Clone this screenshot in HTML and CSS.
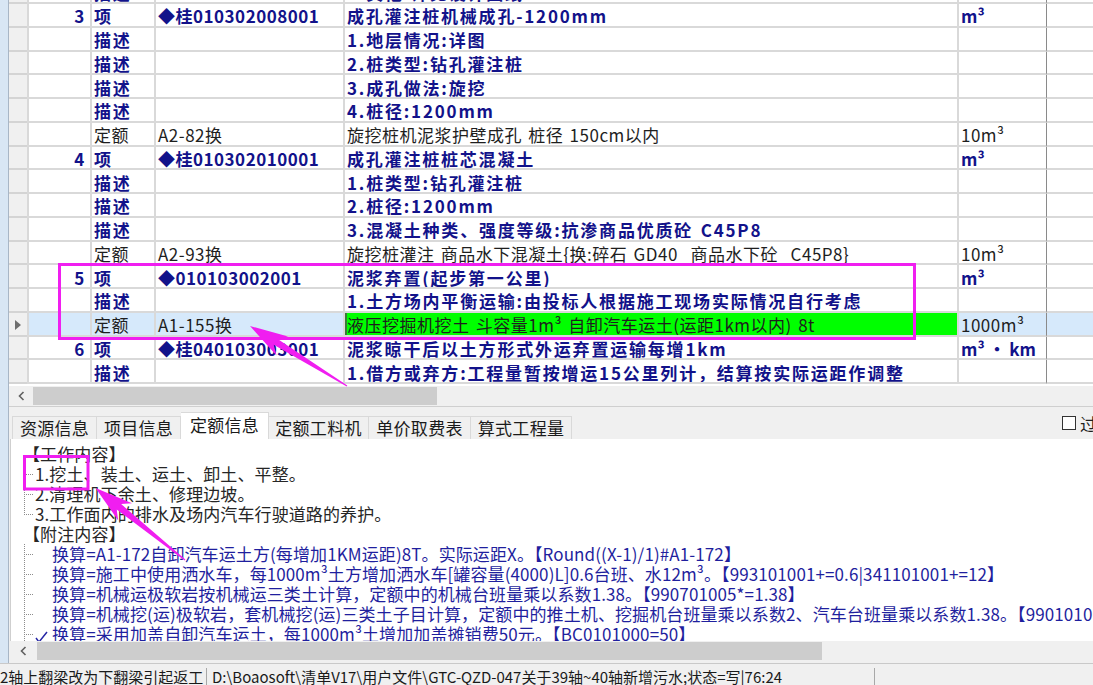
FILE: index.html
```html
<!DOCTYPE html>
<html lang="zh-CN">
<head>
<meta charset="utf-8">
<title>清单</title>
<link rel="stylesheet" href="styles.css">
</head>
<body>
<div class="app">
  <div class="main">
    <div class="strip"></div>
    <div class="panel">
      <div class="gridwrap">
        <div class="grid">
          <div class="row"><div class="c rh"></div><div class="c num b"></div><div class="c typ b">描述</div><div class="c code"></div><div class="c name b">5.其他:详见设计图纸</div><div class="c unit"></div><div class="c rest"></div></div>
          <div class="row"><div class="c rh"></div><div class="c num b">3</div><div class="c typ b">项</div><div class="c code b">◆桂010302008001</div><div class="c name b">成孔灌注桩机械成孔-1200mm</div><div class="c unit b">m³</div><div class="c rest"></div></div>
          <div class="row"><div class="c rh"></div><div class="c num"></div><div class="c typ b">描述</div><div class="c code"></div><div class="c name b">1.地层情况:详图</div><div class="c unit"></div><div class="c rest"></div></div>
          <div class="row"><div class="c rh"></div><div class="c num"></div><div class="c typ b">描述</div><div class="c code"></div><div class="c name b">2.桩类型:钻孔灌注桩</div><div class="c unit"></div><div class="c rest"></div></div>
          <div class="row"><div class="c rh"></div><div class="c num"></div><div class="c typ b">描述</div><div class="c code"></div><div class="c name b">3.成孔做法:旋挖</div><div class="c unit"></div><div class="c rest"></div></div>
          <div class="row"><div class="c rh"></div><div class="c num"></div><div class="c typ b">描述</div><div class="c code"></div><div class="c name b">4.桩径:1200mm</div><div class="c unit"></div><div class="c rest"></div></div>
          <div class="row"><div class="c rh"></div><div class="c num"></div><div class="c typ">定额</div><div class="c code">A2-82换</div><div class="c name">旋挖桩机泥浆护壁成孔 桩径 150cm以内</div><div class="c unit">10m³</div><div class="c rest"></div></div>
          <div class="row"><div class="c rh"></div><div class="c num b">4</div><div class="c typ b">项</div><div class="c code b">◆桂010302010001</div><div class="c name b">成孔灌注桩桩芯混凝土</div><div class="c unit b">m³</div><div class="c rest"></div></div>
          <div class="row"><div class="c rh"></div><div class="c num"></div><div class="c typ b">描述</div><div class="c code"></div><div class="c name b">1.桩类型:钻孔灌注桩</div><div class="c unit"></div><div class="c rest"></div></div>
          <div class="row"><div class="c rh"></div><div class="c num"></div><div class="c typ b">描述</div><div class="c code"></div><div class="c name b">2.桩径:1200mm</div><div class="c unit"></div><div class="c rest"></div></div>
          <div class="row"><div class="c rh"></div><div class="c num"></div><div class="c typ b">描述</div><div class="c code"></div><div class="c name b">3.混凝土种类、强度等级:抗渗商品优质砼 C45P8</div><div class="c unit"></div><div class="c rest"></div></div>
          <div class="row"><div class="c rh"></div><div class="c num"></div><div class="c typ">定额</div><div class="c code">A2-93换</div><div class="c name">旋挖桩灌注 商品水下混凝土{换:碎石 GD40  商品水下砼  C45P8}</div><div class="c unit">10m³</div><div class="c rest"></div></div>
          <div class="row"><div class="c rh"></div><div class="c num b">5</div><div class="c typ b">项</div><div class="c code b">◆010103002001</div><div class="c name b">泥浆弃置(起步第一公里)</div><div class="c unit b">m³</div><div class="c rest"></div></div>
          <div class="row"><div class="c rh"></div><div class="c num"></div><div class="c typ b">描述</div><div class="c code"></div><div class="c name b">1.土方场内平衡运输:由投标人根据施工现场实际情况自行考虑</div><div class="c unit"></div><div class="c rest"></div></div>
          <div class="row sel"><div class="c rh"><svg class="cur" width="6" height="10" viewBox="0 0 6 10"><polygon points="0,0 6,5 0,10" fill="#6e6e6e"/></svg></div><div class="c num"></div><div class="c typ">定额</div><div class="c code">A1-155换</div><div class="c name hl">液压挖掘机挖土 斗容量1m³ 自卸汽车运土(运距1km以内) 8t</div><div class="c unit">1000m³</div><div class="c rest"></div></div>
          <div class="row"><div class="c rh"></div><div class="c num b">6</div><div class="c typ b">项</div><div class="c code b">◆桂040103003001</div><div class="c name b">泥浆晾干后以土方形式外运弃置运输每增1km</div><div class="c unit b">m³ · km</div><div class="c rest"></div></div>
          <div class="row"><div class="c rh"></div><div class="c num"></div><div class="c typ b">描述</div><div class="c code"></div><div class="c name b">1.借方或弃方:工程量暂按增运15公里列计，结算按实际运距作调整</div><div class="c unit"></div><div class="c rest"></div></div>
        </div>
      </div>

      <div class="hscroll">
        <div class="sarrow"><svg width="7" height="10" viewBox="0 0 7 10"><polyline points="5.5,1 1.5,5 5.5,9" fill="none" stroke="#606060" stroke-width="1.6"/></svg></div>
        <div class="track"><div class="thumb"></div></div>
      </div>

      <div class="tabbar">
        <div class="tab">资源信息</div>
        <div class="tab">项目信息</div>
        <div class="tab on">定额信息</div>
        <div class="tab">定额工料机</div>
        <div class="tab">单价取费表</div>
        <div class="tab">算式工程量</div>
        <div class="chk"><span class="box"></span><span class="chk-t">过滤</span></div>
      </div>

      <div class="content">
        <div class="ln">【工作内容】</div>
        <div class="ln"><span class="tree"></span>1.挖土、装土、运土、卸土、平整。</div>
        <div class="ln"><span class="tree"></span>2.清理机下余土、修理边坡。</div>
        <div class="ln"><span class="tree last"></span>3.工作面内的排水及场内汽车行驶道路的养护。</div>
        <div class="ln">【附注内容】</div>
        <div class="ln att"><span class="tree"></span><span class="ico"></span>换算=A1-172自卸汽车运土方(每增加1KM运距)8T。实际运距X。【Round((X-1)/1)#A1-172】</div>
        <div class="ln att"><span class="tree"></span><span class="ico"></span>换算=施工中使用洒水车，每1000m³土方增加洒水车[罐容量(4000)L]0.6台班、水12m³。【993101001+=0.6|341101001+=12】</div>
        <div class="ln att"><span class="tree"></span><span class="ico"></span>换算=机械运极软岩按机械运三类土计算，定额中的机械台班量乘以系数1.38。【990701005*=1.38】</div>
        <div class="ln att"><span class="tree"></span><span class="ico"></span>换算=机械挖(运)极软岩，套机械挖(运)三类土子目计算，定额中的推土机、挖掘机台班量乘以系数2、汽车台班量乘以系数1.38。【990101001*=2】</div>
        <div class="ln att"><span class="tree"></span><span class="ico"><svg width="14" height="12" viewBox="0 0 14 12"><polyline points="1,7 4,11 12,1" fill="none" stroke="#2626a6" stroke-width="1.5"/></svg></span>换算=采用加盖自卸汽车运土，每1000m³土增加加盖摊销费50元。【BC0101000=50】</div>
      </div>

      <div class="hscroll bot">
        <div class="sarrow"><svg width="7" height="10" viewBox="0 0 7 10"><polyline points="5.5,1 1.5,5 5.5,9" fill="none" stroke="#606060" stroke-width="1.6"/></svg></div>
        <div class="track"><div class="thumb"></div></div>
      </div>
    </div>
  </div>

  <div class="status">
    <div class="s1">2轴上翻梁改为下翻梁引起返工</div>
    <div class="s2">D:\Boaosoft\清单V17\用户文件\GTC-QZD-047关于39轴~40轴新增污水;状态=写|76:24</div>
    <div class="s3"></div>
  </div>
</div>

<svg class="marks" width="1093" height="685" viewBox="0 0 1093 685">
  <rect x="59.5" y="264.5" width="855" height="74" fill="none" stroke="#f01ef0" stroke-width="3"/>
  <rect x="24.5" y="456.5" width="63.5" height="32.5" fill="none" stroke="#f01ef0" stroke-width="3"/>
  <polygon points="250,326 288.1,336.6 277.3,338.8 347.3,385.5 346.7,386.5 273.7,344.8 276.5,355.4" fill="#f01ef0"/>
  <polygon points="95.5,488 132,503.2 121.1,504.1 185.4,559.5 184.6,560.5 116.7,509.5 118.2,520.4" fill="#f01ef0"/>
</svg>
</body>
</html>
```

FILE: styles.css
```css
* { box-sizing: border-box; }

html, body {
  margin: 0;
  padding: 0;
}

body {
  width: 1093px;
  height: 685px;
  overflow: hidden;
  position: relative;
  background: #f0f0f0;
  font-family: "Noto Sans CJK SC", "Noto Sans", sans-serif;
  color: #1e1e1e;
}

.app {
  display: flex;
  flex-direction: column;
  height: 685px;
}

.main {
  display: flex;
  height: 663px;
  flex-shrink: 0;
}

.strip {
  width: 9px;
  flex-shrink: 0;
  background: #d8e6f4;
  border-right: 1px solid #a8b6c6;
}

.panel {
  flex: 1;
  min-width: 0;
  display: flex;
  flex-direction: column;
  overflow: hidden;
}

/* ---------- grid ---------- */
.gridwrap {
  height: 386px;
  flex-shrink: 0;
  overflow: hidden;
  background: #fff;
}

.grid {
  margin-top: -19.75px;
}

.row {
  display: grid;
  grid-template-columns: 18px 63px 64px 189px 614px 89px 1fr;
  height: 23.75px;
}

.c {
  display: flex;
  align-items: center;
  white-space: pre;
  overflow: hidden;
  border-left: 2px solid #d9d9d9;
  border-bottom: 2px solid #d9d9d9;
  padding: 2px 2px 0 2px;
  font-size: 17px;
  line-height: 19px;
  letter-spacing: 0.5px;
  word-spacing: 2px;
  color: #1e1e1e;
}

.rh {
  background: #f0f0f0;
  border-left: none;
  border-bottom-color: #d4d4d4;
  padding-left: 6px;
}

.num {
  justify-content: flex-end;
  padding-right: 4px;
}

.rest {
  border-left: 1px solid #8a8a8a;
}

.b {
  font-weight: 700;
  color: #12128a;
  letter-spacing: 1.8px;
}

.code.b {
  letter-spacing: 0.5px;
}

.unit.b {
  letter-spacing: 0;
  word-spacing: 0;
}

.row.sel .c {
  background: #d6e9fb;
}

.row.sel .c.rh {
  background: #f0f0f0;
}

.row.sel .c.hl {
  background: #00ff00;
  box-shadow: inset 2px 0 0 #3a7a3a;
}

.cur {
  display: block;
}

/* ---------- scrollbars ---------- */
.hscroll {
  height: 20px;
  flex-shrink: 0;
  display: flex;
  background: #f0f0f0;
}

.sarrow {
  width: 24px;
  flex-shrink: 0;
  display: flex;
  align-items: center;
  justify-content: center;
}

.track {
  flex: 1;
  padding-top: 1px;
}

.thumb {
  width: 404px;
  height: 18px;
  background: #cdcdcd;
}

.hscroll.bot .sarrow {
  width: 28px;
}

.hscroll.bot .thumb {
  width: 785px;
}

/* ---------- tabs ---------- */
.tabbar {
  height: 33px;
  flex-shrink: 0;
  display: flex;
  align-items: flex-end;
  padding-left: 3px;
  border-top: 1px solid #cfcfcf;
  background: #f0f0f0;
  overflow: hidden;
}

.tab {
  flex-shrink: 0;
  height: 23px;
  border: 1px solid #d9d9d9;
  border-left: none;
  border-bottom: none;
  background: #f0f0f0;
  font-size: 17px;
  line-height: 22px;
  text-align: center;
  letter-spacing: 0.3px;
  color: #1a1a1a;
}

.tab:nth-child(1) { width: 85px; border-left: 1px solid #d9d9d9; }
.tab:nth-child(2) { width: 84px; }
.tab:nth-child(3) { width: 88px; }
.tab:nth-child(4) { width: 100px; }
.tab:nth-child(5) { width: 102px; }
.tab:nth-child(6) { width: 101px; }

.tab.on {
  height: 27px;
  line-height: 24px;
  background: #fff;
}

.chk {
  flex-shrink: 0;
  align-self: center;
  display: flex;
  align-items: center;
  margin-left: 490px;
  font-size: 17px;
}

.box {
  width: 14px;
  height: 14px;
  border: 1px solid #333;
  background: #fff;
}

.chk-t {
  margin-left: 4px;
  white-space: nowrap;
}

/* ---------- content ---------- */
.content {
  height: 202px;
  flex-shrink: 0;
  overflow: hidden;
  background: #fff;
  margin-left: 1px;
  border-left: 1px solid #cfcfcf;
  padding: 5px 0 0 12px;
  font-size: 17px;
  color: #262626;
  letter-spacing: 0.1px;
}

.ln {
  height: 20px;
  line-height: 20px;
  display: flex;
  align-items: center;
  white-space: pre;
}

.tree {
  flex-shrink: 0;
  width: 10px;
  height: 20px;
  margin-left: 1px;
  margin-right: 1px;
  background:
    repeating-linear-gradient(to bottom, #8c8c8c 0 1px, transparent 1px 2px) 0 0 / 1px 100% no-repeat,
    repeating-linear-gradient(to right, #8c8c8c 0 1px, transparent 1px 2px) 0 10px / 100% 1px no-repeat;
}

.tree.last {
  background:
    repeating-linear-gradient(to bottom, #8c8c8c 0 1px, transparent 1px 2px) 0 0 / 1px 11px no-repeat,
    repeating-linear-gradient(to right, #8c8c8c 0 1px, transparent 1px 2px) 0 10px / 100% 1px no-repeat;
}

.ico {
  flex-shrink: 0;
  width: 17px;
  height: 20px;
  display: flex;
  align-items: flex-end;
  padding-bottom: 1px;
}

.att {
  color: #1f1f9e;
}

/* ---------- status ---------- */
.status {
  height: 22px;
  flex-shrink: 0;
  display: flex;
  border-top: 1px solid #c9c9c9;
  background: #f0f0f0;
  font-size: 15px;
  line-height: 18px;
  padding-top: 4px;
  color: #1a1a1a;
  overflow: hidden;
}

.s1 {
  width: 207px;
  flex-shrink: 0;
  border-right: 1px solid #a8a8a8;
  white-space: nowrap;
  overflow: hidden;
}

.s2 {
  width: 668px;
  flex-shrink: 0;
  padding-left: 5px;
  border-right: 1px solid #a8a8a8;
  white-space: nowrap;
  overflow: hidden;
}

.s3 {
  flex: 1;
}

/* ---------- annotation overlay ---------- */
.marks {
  position: absolute;
  left: 0;
  top: 0;
  pointer-events: none;
}
```
